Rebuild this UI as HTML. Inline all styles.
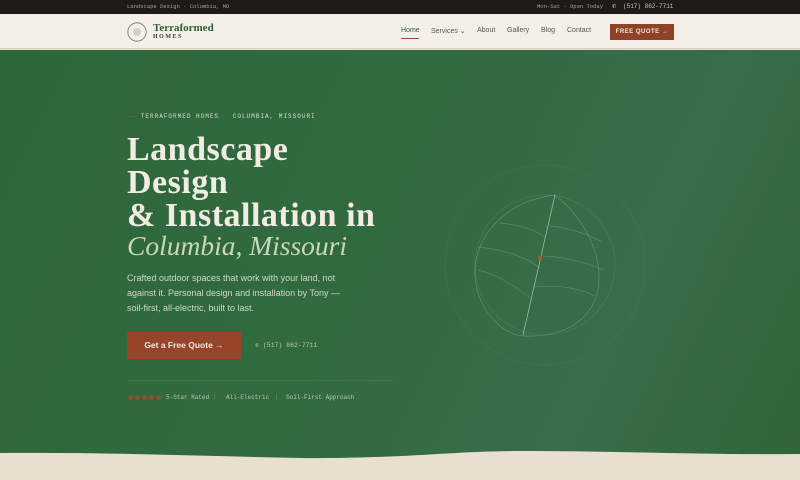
<!DOCTYPE html>
<html><head><meta charset="utf-8"><style>
*{margin:0;padding:0;box-sizing:border-box}
body{width:800px;height:480px;overflow:hidden;position:relative;font-family:"Liberation Sans",sans-serif;background:#e8dfcf}
.top{position:absolute;top:0;left:0;width:800px;height:14px;background:#1d1b17;color:#a8a294;font-family:"Liberation Mono",monospace;font-size:5.5px;line-height:14px}
.nav{position:absolute;top:14px;left:0;width:800px;height:35px;background:#f4efe7;border-bottom:1px solid #cfd3c8}
.hero{position:absolute;top:50px;left:0;width:800px;height:430px;background:linear-gradient(115deg,#2e673a 0%,#326a40 45%,#386d4a 75%,#2f6538 100%)}
.mono{font-family:"Liberation Mono",monospace}
.n{position:absolute;top:13px;font-size:7px;color:#555}
.t{position:absolute;top:344px;font-size:6px;color:#b7c8b5;font-family:"Liberation Mono",monospace}
</style></head><body>
<div class="top"><span style="position:absolute;left:127px">Landscape Design · Columbia, MO</span><span style="position:absolute;left:537px">Mon-Sat · Open Today</span><span style="position:absolute;left:612px;color:#ddd;font-size:7px">✆</span><span style="position:absolute;left:623px;color:#c9c3b5;font-size:6px">(517) 862-7711</span></div>
<div class="nav">
<svg style="position:absolute;left:127px;top:8px" width="20" height="20" viewBox="0 0 20 20"><circle cx="10" cy="10" r="9.2" fill="none" stroke="#5b7a5f" stroke-width=".8"/><circle cx="10" cy="10" r="4" fill="#cfd3c3"/></svg>
<div style="position:absolute;left:153px;top:8px;font-family:'Liberation Serif',serif;font-weight:bold;font-size:11px;color:#2f5e34">Terraformed</div>
<div style="position:absolute;left:153px;top:20px;font-family:'Liberation Serif',serif;font-weight:bold;font-size:6px;letter-spacing:1.5px;color:#3a3a32">HOMES</div>
<div class="n" style="left:401px;color:#2f5e34">Home</div>
<div style="position:absolute;left:401px;top:24px;width:18px;height:1px;background:#9a4a2c"></div>
<div class="n" style="left:431px">Services ⌄</div>
<div class="n" style="left:477px">About</div>
<div class="n" style="left:507px">Gallery</div>
<div class="n" style="left:541px">Blog</div>
<div class="n" style="left:567px">Contact</div>
<div style="position:absolute;left:610px;top:10px;width:64px;height:16px;background:#8f4227;color:#f4e8dc;font-size:6px;font-weight:bold;letter-spacing:.5px;line-height:16px;text-align:center">FREE QUOTE →</div>
</div>
<div class="hero">
<svg style="position:absolute;left:0;top:0" width="800" height="430" viewBox="0 50 800 430" fill="none" stroke="#8fb89a" stroke-opacity=".3" stroke-width=".7">
<circle cx="545" cy="265" r="100" stroke-opacity=".1"/>
<circle cx="545" cy="265" r="70" stroke-opacity=".2"/>
<path d="M555 195 C505 200 468 240 476 285 C482 315 505 335 523 336 C570 338 600 315 599 275 C598 245 580 215 555 195Z" stroke-opacity=".5"/>
<path d="M555 195 L523 335" stroke="#cfe2cf" stroke-opacity=".75"/>
<path d="M500 223 C520 225 535 230 545 237 M550 226 C570 228 590 235 602 242 M478 247 C510 250 530 260 540 268 M543 256 C570 257 592 265 604 270 M478 270 C500 275 520 290 530 298 M534 287 C560 284 585 290 594 296" stroke-opacity=".4"/>
<circle cx="540" cy="258" r="2" fill="#b8532e" stroke="none"/>
</svg>
<div class="mono" style="position:absolute;left:127px;top:63px;font-size:6px;letter-spacing:1px;color:#d8dccf"><span style="color:#a4553a">—— </span>TERRAFORMED HOMES <span style="color:#a4553a">·</span> COLUMBIA, MISSOURI</div>
<div style="position:absolute;left:127px;top:83px;font-family:'Liberation Serif',serif;font-weight:bold;font-size:34px;line-height:33px;color:#f2ede2;letter-spacing:.5px">Landscape<br>Design<br>&amp; Installation in</div>
<div style="position:absolute;left:127px;top:180px;font-family:'Liberation Serif',serif;font-style:italic;font-size:27.5px;color:#c9d6bd">Columbia, Missouri</div>
<div style="position:absolute;left:127px;top:221px;font-size:9px;line-height:15px;color:#d0d8ca;width:222px">Crafted outdoor spaces that work with your land, not against it. Personal design and installation by Tony — soil-first, all-electric, built to last.</div>
<div style="position:absolute;left:127px;top:282px;width:114px;height:27px;background:#96452a;color:#f3e8dc;font-size:8.5px;font-weight:bold;line-height:27px;text-align:center">Get a Free Quote →</div>
<div class="mono" style="position:absolute;left:255px;top:291px;font-size:6.5px;color:#b7c8b5"><span style="color:#ddd">✆</span> (517) 862-7711</div>
<div style="position:absolute;left:127px;top:330px;width:266px;height:1px;background:#5e8a68;opacity:.4"></div>
<svg style="position:absolute;left:127px;top:344px" width="36" height="7" viewBox="0 0 36 7" fill="#a24a2c"><g id="s"><polygon points="3.5,0 4.4,2.5 7,2.6 5,4.2 5.7,6.8 3.5,5.3 1.3,6.8 2,4.2 0,2.6 2.6,2.5"/></g><use href="#s" x="7"/><use href="#s" x="14"/><use href="#s" x="21"/><use href="#s" x="28"/></svg>
<div class="t" style="left:166px">5-Star Rated</div>
<div class="t" style="left:213px;color:#6f9078">│</div>
<div class="t" style="left:226px">All-Electric</div>
<div class="t" style="left:275px;color:#6f9078">│</div>
<div class="t" style="left:286px">Soil-First Approach</div>
<svg style="position:absolute;left:0;top:395px" width="800" height="35" viewBox="0 445 800 35"><path d="M0 453 C100 452 200 456 300 458 C400 459 450 451 520 451 C620 451 700 455 800 454 L800 480 L0 480Z" fill="#e8dfcf"/></svg>
</div>
</body></html>
